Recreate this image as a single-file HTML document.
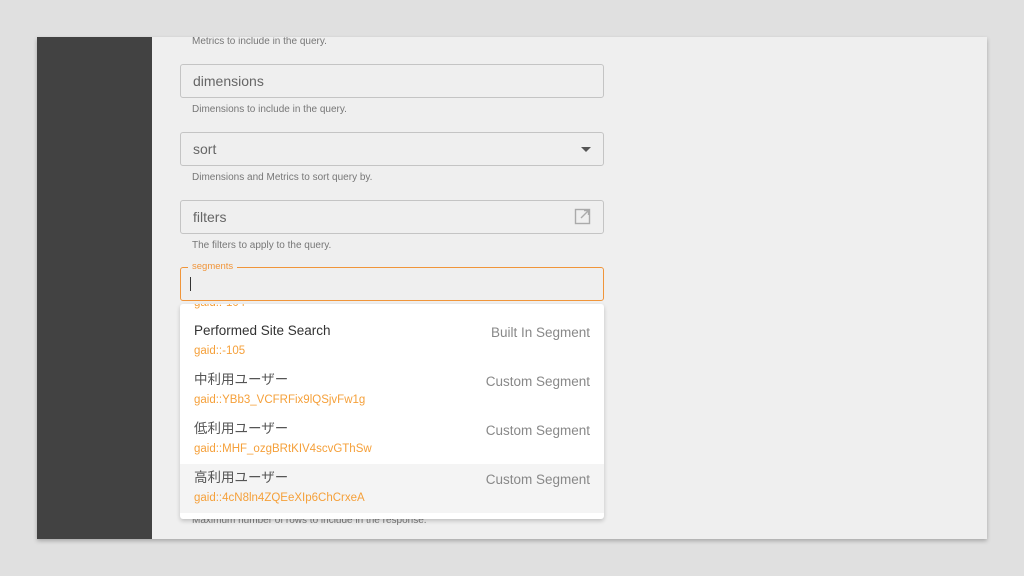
<!DOCTYPE html>
<html><head><meta charset="utf-8"><style>
*{box-sizing:border-box;margin:0;padding:0}
body{width:1024px;height:576px;background:#e0e0e0;position:relative;overflow:hidden;font-family:"Liberation Sans","Noto Sans CJK JP",sans-serif}
.frame{position:absolute;left:37px;top:37px;width:950px;height:502px;background:#efefef;box-shadow:0 2px 4px rgba(0,0,0,.25);overflow:hidden}
.side{position:absolute;left:0;top:0;width:115px;height:502px;background:#424242}
.f{position:absolute;left:143px;width:424px;height:34px;border:1px solid #c4c4c4;border-radius:3px;font-size:14px;color:#666;padding:8px 12px}
.h{position:absolute;left:155px;font-size:10px;color:#777}
.dd{position:absolute;left:143px;top:267px;width:424px;height:215px;background:#fff;border-radius:3px;box-shadow:0 2px 4px rgba(0,0,0,.2);overflow:hidden}
.it{position:absolute;left:0;width:424px;height:49px}
.t,.g,.r{line-height:16px;white-space:nowrap}
.t{position:absolute;left:14px;top:6px;font-size:13.5px;color:#333}
.j{color:#555}
.g{position:absolute;left:14px;top:26px;font-size:11.5px;color:#f5a03a}
.r{position:absolute;right:14px;top:8px;font-size:13.5px;color:#888}
</style></head><body>
<div class="frame">
<div class="side"></div>
<div class="h" style="top:-1px">Metrics to include in the query.</div>
<div class="f" style="top:27px">dimensions</div>
<div class="h" style="top:67px">Dimensions to include in the query.</div>
<div class="f" style="top:95px">sort<span style="position:absolute;right:12px;top:14px;width:0;height:0;border-left:5px solid transparent;border-right:5px solid transparent;border-top:5px solid #555"></span></div>
<div class="h" style="top:135px">Dimensions and Metrics to sort query by.</div>
<div class="f" style="top:163px">filters<svg style="position:absolute;right:12px;top:7px" width="17" height="17" viewBox="0 0 17 17" fill="none" stroke="#aaa" stroke-width="1.4"><rect x="1.5" y="1.5" width="14" height="14"/><path d="M10 2.5h4.5V7M14.5 2.5L7 10"/></svg></div>
<div class="h" style="top:203px">The filters to apply to the query.</div>
<div class="f" style="top:230px;border:1.5px solid #f0953a"><span style="position:absolute;left:7px;top:-7px;background:#efefef;padding:0 4px;font-size:9.5px;color:#f0953a">segments</span><span style="position:absolute;left:9px;top:9px;width:1px;height:14px;background:#333"></span></div>
<div class="h" style="top:478px">Maximum number of rows to include in the response.</div>
<div class="dd">
<div class="g" style="top:-9px;left:14px">gaid::-104</div>
<div class="it" style="top:13px"><div class="t">Performed Site Search</div><div class="g">gaid::-105</div><div class="r">Built In Segment</div></div>
<div class="it" style="top:62px"><div class="t j">中利用ユーザー</div><div class="g">gaid::YBb3_VCFRFix9lQSjvFw1g</div><div class="r">Custom Segment</div></div>
<div class="it" style="top:111px"><div class="t j">低利用ユーザー</div><div class="g">gaid::MHF_ozgBRtKIV4scvGThSw</div><div class="r">Custom Segment</div></div>
<div class="it" style="top:160px;background:#f4f4f4"><div class="t j">高利用ユーザー</div><div class="g">gaid::4cN8ln4ZQEeXIp6ChCrxeA</div><div class="r">Custom Segment</div></div>
</div>
</div>
</body></html>
